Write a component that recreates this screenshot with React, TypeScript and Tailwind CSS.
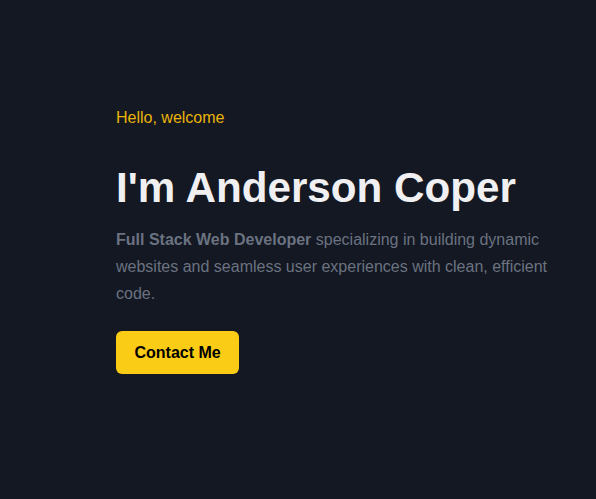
export default function App() {
  return (
    <section
      className="min-h-screen bg-[#131823] pl-[116px] pr-6 pt-[106px]"
      style={{ fontFamily: '"Liberation Sans", Arial, sans-serif' }}
    >
      <div className="max-w-[448px]">
        <p className="mb-[33px] text-base leading-6 text-[#eab308]">Hello, welcome</p>
        <h1 className="mb-3 whitespace-nowrap text-[42.2px] font-bold leading-[1.2] text-[#f0f0f2]">
          I'm Anderson Coper
        </h1>
        <p className="mb-6 text-base leading-[1.7] text-[#6b7280]">
          <span className="font-bold">Full Stack Web Developer</span> specializing in building dynamic
          websites and seamless user experiences with clean, efficient code.
        </p>
        <button className="h-[43px] rounded-md bg-[#facc15] px-[18.5px] text-base font-bold text-black">
          Contact Me
        </button>
      </div>
    </section>
  );
}
